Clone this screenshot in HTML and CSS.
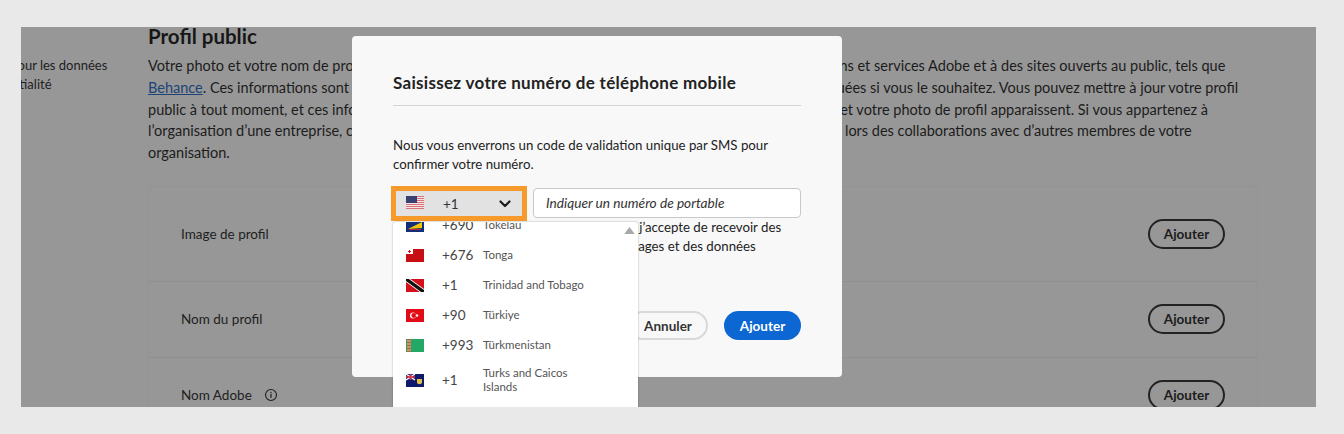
FILE: index.html
```html
<!DOCTYPE html>
<html lang="fr">
<head>
<meta charset="utf-8">
<title>Profil public</title>
<link rel="stylesheet" href="styles.css">
</head>
<body>
<div class="frame">
  <div class="page">
    <aside class="side"><p>Règles pour les données</p><p>confidentialité</p></aside>
    <main class="main">
      <h2 class="section-title">Profil public</h2>
      <p class="intro">Votre photo et votre nom de profil sont visibles pour tous les utilisateurs sur votre compte, dans les applications et services Adobe et à des sites ouverts au public, tels que<br><a href="#" class="link">Behance</a>. Ces informations sont visibles par tous les abonnés de la communauté Adobe et peuvent être masquées si vous le souhaitez. Vous pouvez mettre à jour votre profil<br>public à tout moment, et ces informations sont ensuite reflétées dans tous les services, partout où votre nom et votre photo de profil apparaissent. Si vous appartenez à<br>l’organisation d’une entreprise, ces informations sont également visibles pour vos collègues directs et utilisées lors des collaborations avec d’autres membres de votre<br>organisation.</p>
      <section class="card">
        <div class="row row-a"><span>Image de profil</span><button class="outline">Ajouter</button></div>
        <div class="row row-b"><span>Nom du profil</span><button class="outline">Ajouter</button></div>
        <div class="row row-c"><span class="with-icon">Nom Adobe
          <svg class="info" viewBox="0 0 14 14"><circle cx="7" cy="7" r="5.500" fill="none" stroke="#1f1f1f" stroke-width="1.100"/><rect x="6.400" y="6" width="1.200" height="3.800" fill="#1f1f1f"/><rect x="6.400" y="3.900" width="1.200" height="1.200" fill="#1f1f1f"/></svg></span><button class="outline">Ajouter</button></div>
      </section>
    </main>
  </div>
  <div class="modal">
    <h3 class="modal-title">Saisissez votre numéro de téléphone mobile</h3>
    <p class="modal-text">Nous vous enverrons un code de validation unique par SMS pour confirmer votre numéro.</p>
    <div class="phone">
      <div class="select">
        <svg class="flag" viewBox="0 0 18 13"><rect width="18" height="13" fill="#f4e4e4"/><path d="M0 .5h18M0 2.500h18M0 4.500h18M0 6.500h18M0 8.500h18M0 10.500h18M0 12.500h18" stroke="#d9727a" stroke-width="1"/><rect width="11" height="7" fill="#38406f"/></svg>
        <span class="code">+1</span>
        <svg class="chev" viewBox="0 0 12 8"><path d="M1.500 1.500 6 6l4.500-4.500" fill="none" stroke="#1c1c1c" stroke-width="2.200" stroke-linecap="round" stroke-linejoin="round"/></svg>
      </div>
      <div class="input">Indiquer un numéro de portable</div>
    </div>
    <p class="consent">En cliquant sur Ajouter, je confirme que j’accepte de recevoir des<br>SMS. Des frais réseau standard de messages et des données<br>peuvent s’appliquer.</p>
    <div class="actions"><button class="btn-cancel">Annuler</button><button class="btn-add">Ajouter</button></div>
    <div class="dropdown">
      <svg class="scroll-up" viewBox="0 0 12 8"><path d="M6 0l6 8H0z" fill="#a8a8a8"/></svg>
      <ul class="list">
        <li class="item"><svg class="flag" viewBox="0 0 18 13"><rect width="18" height="13" fill="#12307a"/><path d="M2 10 16 3v6z" fill="#f5c400"/><path d="M3 10.600h12" stroke="#d8232a" stroke-width=".9"/></svg><span class="dial">+690</span><span class="name">Tokelau</span></li>
        <li class="item"><svg class="flag" viewBox="0 0 18 13"><rect width="18" height="13" fill="#c70f13"/><rect width="7" height="5" fill="#fff"/><path d="M3.500 1v3M2 2.500h3" stroke="#c70f13" stroke-width="1"/></svg><span class="dial">+676</span><span class="name">Tonga</span></li>
        <li class="item"><svg class="flag" viewBox="0 0 18 13"><rect width="18" height="13" fill="#d40f1c"/><path d="M0 0 18 13" stroke="#fff" stroke-width="5"/><path d="M0 0 18 13" stroke="#111" stroke-width="3.400"/></svg><span class="dial">+1</span><span class="name">Trinidad and Tobago</span></li>
        <li class="item"><svg class="flag" viewBox="0 0 18 13"><rect width="18" height="13" fill="#e30a17"/><circle cx="7" cy="6.500" r="3" fill="#fff"/><circle cx="7.800" cy="6.500" r="2.400" fill="#e30a17"/><circle cx="11" cy="6.500" r="1.200" fill="#fff"/></svg><span class="dial">+90</span><span class="name">Türkiye</span></li>
        <li class="item"><svg class="flag" viewBox="0 0 18 13"><rect width="18" height="13" fill="#23a866"/><rect x="1" width="4" height="13" fill="#b5653f"/><path d="M1 2h4M1 5h4M1 8h4M1 11h4" stroke="#e8d9a8" stroke-width=".8"/></svg><span class="dial">+993</span><span class="name">Türkmenistan</span></li>
        <li class="item item-tall"><svg class="flag" viewBox="0 0 18 13"><rect width="18" height="13" fill="#10196b"/><rect width="9" height="6" fill="#2b2f80"/><path d="M0 0l9 6M9 0 0 6" stroke="#fff" stroke-width="1.200"/><path d="M4.500 0v6M0 3h9" stroke="#e0303a" stroke-width="1.400"/><path d="M11 5h5v4q-2.500 2.500-5 0z" fill="#e0c24a"/></svg><span class="dial">+1</span><span class="name">Turks and Caicos<br>Islands</span></li>
      </ul>
    </div>
  </div>
</div>
</body>
</html>
```
FILE: styles.css
```css
* { box-sizing: border-box; }
html, body { margin: 0; height: 100%; }
body { background: #e9e9e9; padding: 27px 28px 0 21px; font-family: "Lato", "Liberation Sans", sans-serif; color: #1e1e1e; overflow: hidden; }
p, h2, h3, ul { margin: 0; padding: 0; }
button { font-family: inherit; cursor: pointer; }
.frame { position: relative; height: 380px; background: #979797; overflow: hidden; }
.page { display: flex; height: 100%; }
.side { flex: 0 0 127px; min-width: 0; margin-left: -51px; padding-top: 29px; font-size: 13px; line-height: 19px; white-space: nowrap; color: #1e1e1e; }
.main { flex: 0 0 1110px; min-width: 0; margin-left: 51px; }
.section-title { font-size: 20.500px; font-weight: 700; line-height: 18px; margin-bottom: 10px; color: #171717; }
.intro { font-size: 14.500px; line-height: 21.800px; white-space: nowrap; color: #1c1c1c; }
.link { color: #1c4477; }
.card { margin-top: 22px; border: 1px solid #939393; border-radius: 4px; background: #979797; }
.row { display: flex; justify-content: space-between; align-items: center; padding: 0 32px; font-size: 13.500px; border-bottom: 1px solid #8f8f8f; }
.row-a { height: 95px; }
.row-b { height: 76px; }
.row-c { height: 75px; }
.with-icon { display: inline-flex; align-items: center; gap: 12px; }
.info { width: 14px; height: 14px; }
.outline { width: 77px; height: 30px; border: 2px solid #222; border-radius: 15px; background: transparent; font-size: 13.500px; font-weight: 700; color: #1c1c1c; padding: 0; }
.modal { position: absolute; left: 331px; top: 9px; width: 490px; height: 341px; background: #f8f8f8; border-radius: 4px; padding: 37px 41px 0; }
.modal-title { font-size: 17px; letter-spacing: .3px; font-weight: 700; line-height: 20px; padding-bottom: 12px; border-bottom: 1px solid #d4d4d4; color: #222; }
.modal-text { margin-top: 30px; font-size: 13.250px; line-height: 19px; color: #222; width: 400px; }
.phone { display: flex; gap: 6px; align-items: flex-start; margin: 12px 0 0 -2px; }
.select { flex: 0 0 136px; height: 35px; border: 5px solid #f79a2c; background: #e2e2e2; display: flex; align-items: center; padding: 0 11px 0 10px; font-size: 13.500px; }
.select .flag { width: 18px; height: 13px; margin-top: -3px; }
.code { margin-left: 19px; flex: 1; color: #333; }
.chev { width: 12px; height: 8px; }
.input { flex: 0 0 268px; height: 30px; margin-top: 2px; border: 1px solid #c8c8c8; border-radius: 4px; background: #fff; padding: 0 12px; font-size: 13.700px; line-height: 27px; font-style: italic; color: #333; }
.consent { margin-top: -3px; padding-left: 15px; font-size: 13.250px; line-height: 19px; color: #222; height: 38px; overflow: hidden; white-space: nowrap; }
.actions { position: absolute; right: 41px; top: 275px; display: flex; gap: 16px; }
.btn-cancel, .btn-add { height: 29px; border-radius: 15px; font-size: 13.500px; font-weight: 700; padding: 0; }
.btn-cancel { width: 80px; border: 2px solid #d9d9d9; background: #f8f8f8; color: #333; }
.btn-add { width: 77px; border: 0; background: #0c67d3; color: #fff; }
.dropdown { position: absolute; left: 41px; top: 186px; width: 245px; height: 200px; background: #fff; border-radius: 3px 3px 0 0; box-shadow: 0 0 2px rgba(0,0,0,.35); overflow: hidden; }
.scroll-up { position: absolute; right: 3px; top: 5px; width: 11px; height: 7px; }
.list { list-style: none; margin-top: -12px; }
.item { display: flex; align-items: center; height: 30px; padding-left: 13px; }
.item .flag { flex: 0 0 18px; width: 18px; height: 13px; }
.item-tall { height: 40px; }
.dial { flex: 0 0 41px; margin-left: 18px; font-size: 13.500px; color: #444; }
.name { font-size: 11.500px; line-height: 14px; color: #555; }
```
